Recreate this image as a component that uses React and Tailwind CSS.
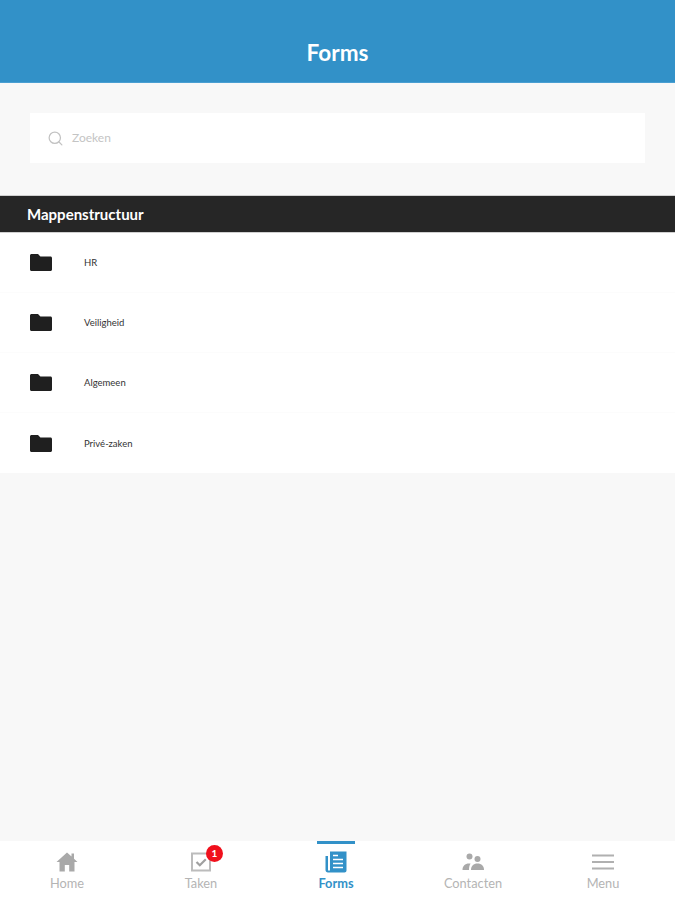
import { Search } from 'lucide-react';

const folders = ['HR', 'Veiligheid', 'Algemeen', 'Privé-zaken'];

const FolderIcon = () => (
  <svg width="22" height="17" viewBox="0 0 22 17" className="shrink-0">
    <path d="M1.500 0h6.500l2.400 2.400h10.100c.8 0 1.500.7 1.500 1.500v11.600c0 .8-.7 1.500-1.500 1.500H1.500C.7 17 0 16.300 0 15.500V1.500C0 .7.7 0 1.500 0z" fill="#1f1f1f" />
  </svg>
);

const HomeIcon = () => (
  <svg width="22" height="20" viewBox="0 0 22 20">
    <path d="M11 0.500 0.500 10H3.500V19.500H8.800V13H13.200V19.500H18.500V10H21.500L18 6.800V1.500H15.500V4.500z" fill="#a9a9a9" />
  </svg>
);

const TasksIcon = () => (
  <svg width="20" height="20" viewBox="0 0 20 20">
    <path d="M1 1.500h18v17H1z" fill="none" stroke="#bcbcbc" strokeWidth="2" />
    <path d="M5.500 10l3.300 3.300 6-6" fill="none" stroke="#a0a0a0" strokeWidth="2.200" />
  </svg>
);

const FormsIcon = () => (
  <svg width="22" height="22" viewBox="0 0 22 22">
    <path d="M5 0.500h16.500v19c0 1.200-.9 2-2 2H3c-1.500 0-2.500-1-2.500-2.500V5H3v14.500h2z" fill="#3291c8" />
    <path d="M8 4.500h5M8 8.500h10M8 12.500h10M8 16.500h10" stroke="#ffffff" strokeWidth="1.600" />
  </svg>
);

const ContactsIcon = () => (
  <svg width="22" height="18" viewBox="0 0 22 18">
    <circle cx="7.500" cy="3.500" r="3" fill="#a9a9a9" />
    <circle cx="15.500" cy="6" r="3" fill="#a9a9a9" />
    <path d="M0.500 17c0-4 2.500-6.500 6.500-6.500 1 0 1.600.2 1.600.2C7.500 12 7 14 7 17z" fill="#a9a9a9" />
    <path d="M9 17c0-4 2.500-6.500 6.500-6.500S22 13 22 17z" fill="#a9a9a9" />
  </svg>
);

const MenuIcon = () => (
  <svg width="22" height="16" viewBox="0 0 22 16">
    <path d="M0 1.500h22M0 8h22M0 14.500h22" stroke="#b0b0b0" strokeWidth="2" />
  </svg>
);

const tabs = [
  { label: 'Home', icon: <HomeIcon /> },
  { label: 'Taken', icon: <TasksIcon />, badge: 1 },
  { label: 'Forms', icon: <FormsIcon />, active: true },
  { label: 'Contacten', icon: <ContactsIcon /> },
  { label: 'Menu', icon: <MenuIcon /> },
];

export default function App() {
  return (
    <div className="flex h-[900px] flex-col bg-[#f8f8f8] font-['Lato','Open_Sans',sans-serif]">
      <header className="flex h-[83px] shrink-0 items-center justify-center bg-[#3291c8] pt-[22px] shadow-[inset_0_-1px_0_#4a9fd2]">
        <h1 className="text-[22.5px] font-bold text-white">Forms</h1>
      </header>

      <div className="px-[30px] pt-[30px] pb-8">
        <div className="flex h-[50px] items-center gap-2 bg-white pl-[17px]">
          <Search size={17} strokeWidth={1.75} className="text-[#c2c2c2]" />
          <span className="text-[12px] text-[#c4c4c4]">Zoeken</span>
        </div>
      </div>

      <div className="flex h-[38px] items-center border-y border-[#d0d0d0] bg-[#262626] pl-[27px]">
        <h2 className="text-[15px] font-bold text-white">Mappenstructuur</h2>
      </div>

      <ul className="bg-white">
        {folders.map((name) => (
          <li key={name} className="flex h-[60px] items-center border-b border-[#fcfcfc] pl-[30px] last:border-b-0">
            <FolderIcon />
            <span className="mt-[2px] ml-[32px] text-[9.5px] text-[#333333]">{name}</span>
          </li>
        ))}
      </ul>

      <nav className="mt-auto grid h-[59px] grid-cols-[134px_134px_136px_138px_122px] bg-white">
        {tabs.map((tab) => (
          <div key={tab.label} className="relative flex flex-col items-center">
            {tab.active && <div className="absolute top-0 h-[3px] w-[38px] bg-[#3291c8]" />}
            <div className="relative mt-[10px] flex h-[22px] items-center justify-center">
              {tab.icon}
              {tab.badge && (
                <span className="absolute top-[-6px] left-[15px] flex h-[17px] w-[17px] items-center justify-center rounded-full bg-[#f0101c] text-[10px] font-bold text-white">
                  {tab.badge}
                </span>
              )}
            </div>
            <span className={`mt-[1px] text-[12.8px] ${tab.active ? 'font-bold text-[#3291c8]' : 'text-[#b4b4b4]'}`}>
              {tab.label}
            </span>
          </div>
        ))}
      </nav>
    </div>
  );
}
